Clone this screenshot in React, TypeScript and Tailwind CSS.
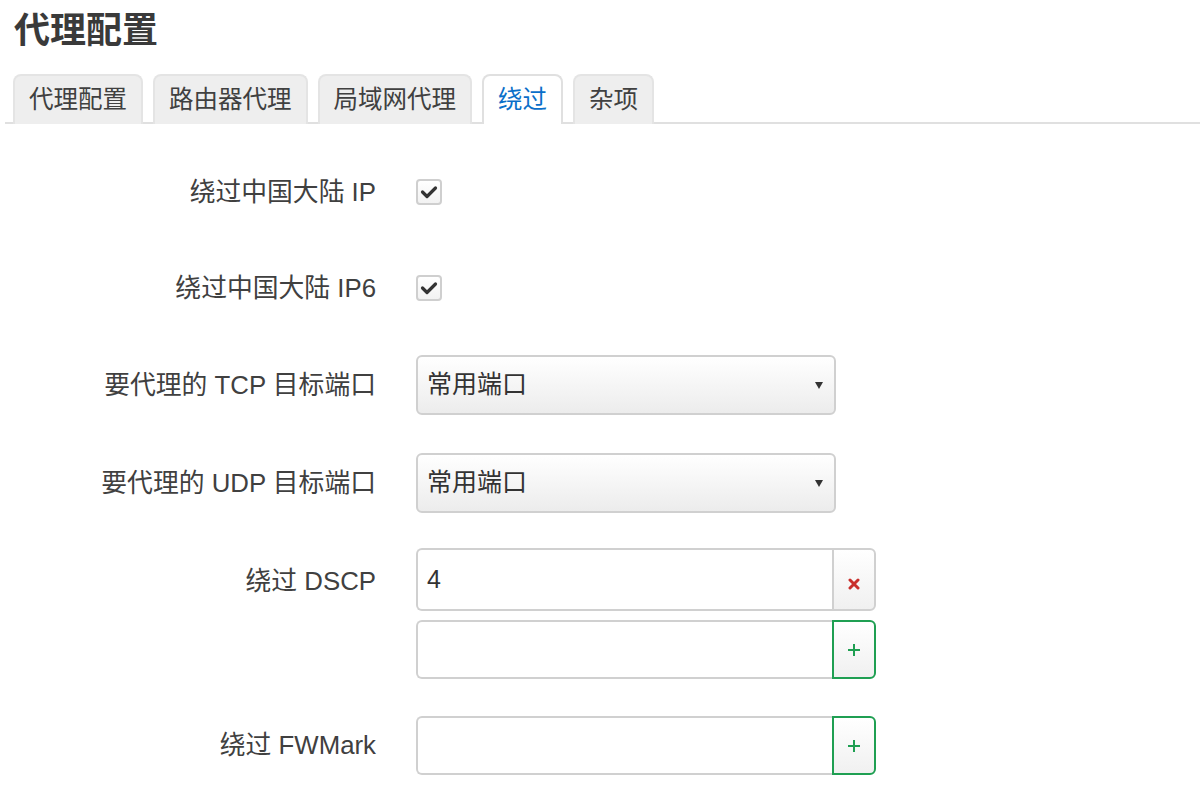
import React from 'react';

const tabs = ['代理配置', '路由器代理', '局域网代理', '绕过', '杂项'];

function Check() {
  return (
    <div className="grid h-[26px] w-[26px] place-items-center rounded-[4px] border-2 border-[#cfcfcf] bg-gradient-to-b from-white to-[#f2f2f2]">
      <svg width="18" height="14" viewBox="0 0 18 14">
        <path d="M2.5 7 L7 11.5 L15.5 3" fill="none" stroke="#333" strokeWidth="3.2" strokeLinecap="round" strokeLinejoin="round" />
      </svg>
    </div>
  );
}

function Select({ value }: { value: string }) {
  return (
    <div className="flex h-[60px] w-[420px] items-center justify-between rounded-[6px] border-2 border-[#d0d0d0] bg-gradient-to-b from-white to-[#ececec] pl-[9px] pr-[11px] text-[25px] text-[#333]">
      <span>{value}</span>
      <svg width="8" height="8" viewBox="0 0 8 8">
        <path d="M0 1 H8 L4 8 Z" fill="#333" />
      </svg>
    </div>
  );
}

function ListInput({ value, kind, tall }: { value?: string; kind: 'del' | 'add'; tall?: boolean }) {
  return (
    <div className={`flex w-[460px] ${tall ? 'h-[63px]' : 'h-[59px]'}`}>
      <div className="flex flex-1 items-center rounded-l-[6px] border-2 border-r-0 border-[#d0d0d0] bg-white pl-[9px] text-[25px] text-[#333]">
        {value}
      </div>
      {kind === 'del' ? (
        <button className="grid w-[44px] place-items-center rounded-r-[6px] border-2 border-[#d0d0d0] bg-gradient-to-b from-white to-[#f0f0f0] pt-[8px]">
          <svg width="12" height="12" viewBox="0 0 12 12">
            <path d="M2 2 L10 10 M10 2 L2 10" stroke="#c9302c" strokeWidth="3" strokeLinecap="round" />
          </svg>
        </button>
      ) : (
        <button className="grid w-[44px] place-items-center rounded-r-[6px] border-2 border-[#1f9f52] bg-gradient-to-b from-white to-[#f0f0f0]">
          <svg width="14" height="14" viewBox="0 0 14 14">
            <path d="M7 1 V13 M1 7 H13" stroke="#1f9f52" strokeWidth="2" />
          </svg>
        </button>
      )}
    </div>
  );
}

function Row({
  label,
  children,
  top,
  className = 'py-[19px]',
}: {
  label: string;
  children: React.ReactNode;
  top?: boolean;
  className?: string;
}) {
  return (
    <div className={`flex ${className} ${top ? 'items-start' : 'items-center'}`}>
      <div className={`w-[376px] text-right text-[25.8px] text-[#404040] ${top ? 'pt-[14px]' : ''}`}>{label}</div>
      <div className="ml-[40px] flex min-h-[58px] flex-col justify-center gap-[9px]">{children}</div>
    </div>
  );
}

export default function App() {
  return (
    <div
      className="h-[800px] w-[1200px] overflow-hidden bg-white text-[#404040]"
      style={{ fontFamily: '"Liberation Sans", "Noto Sans CJK SC", sans-serif' }}
    >
      <h2 className="pl-[14px] pt-[9px] text-[36px] font-bold leading-[44px] text-[#3a3a3a]">代理配置</h2>

      <div className="ml-[5px] mt-[21px] flex gap-[10px] border-b-2 border-[#e0e0e0] pl-[8px]">
        {tabs.map((t) => {
          const active = t === '绕过';
          return (
            <div
              key={t}
              className={`-mb-[2px] flex h-[50px] items-center rounded-t-[8px] border-2 border-b-0 px-[14px] text-[24.5px] ${
                active ? 'border-[#e0e0e0] bg-white text-[#0a6fc9]' : 'border-[#e4e4e4] bg-[#eeeeee] text-[#404040]'
              }`}
            >
              {t}
            </div>
          );
        })}
      </div>

      <div className="mt-[20px]">
        <Row label="绕过中国大陆 IP">
          <Check />
        </Row>
        <Row label="绕过中国大陆 IP6">
          <Check />
        </Row>
        <Row label="要代理的 TCP 目标端口">
          <Select value="常用端口" />
        </Row>
        <Row label="要代理的 UDP 目标端口">
          <Select value="常用端口" />
        </Row>
        <Row label="绕过 DSCP" top className="pb-[18px] pt-[16px]">
          <ListInput value="4" kind="del" tall />
          <ListInput kind="add" />
        </Row>
        <Row label="绕过 FWMark">
          <ListInput kind="add" />
        </Row>
      </div>
    </div>
  );
}
